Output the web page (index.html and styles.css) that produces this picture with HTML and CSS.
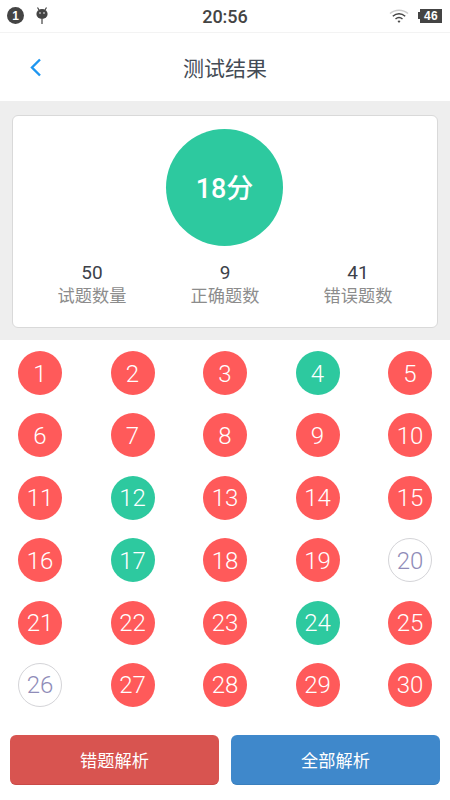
FILE: index.html
```html
<!DOCTYPE html>
<html lang="zh">
<head>
<meta charset="utf-8">
<title>测试结果</title>
<link rel="stylesheet" href="styles.css">
</head>
<body>
<div class="status">
  <div class="status-left">
    <span class="badge">1</span>
    <svg class="android" width="16" height="20" viewBox="0 0 16 20"><path d="M3.5 1.5 5 4M12.5 1.5 11 4" stroke="#444" stroke-width="1.2" fill="none"/><ellipse cx="8" cy="8" rx="5.6" ry="5" fill="#444"/><circle cx="6" cy="7" r=".8" fill="#fff"/><circle cx="10" cy="7" r=".8" fill="#fff"/><rect x="7.4" y="13" width="1.2" height="5" fill="#444"/></svg>
  </div>
  <div class="clock">20:56</div>
  <div class="status-right">
    <svg width="20" height="16" viewBox="0 0 20 16"><path d="M1 5.5C6 1 14 1 19 5.5" stroke="#ccc" stroke-width="1.5" fill="none"/><path d="M3.8 8.2C7.5 5 12.5 5 16.2 8.2" stroke="#444" stroke-width="1.5" fill="none"/><path d="M6.5 11C8.6 9.3 11.4 9.3 13.5 11" stroke="#444" stroke-width="1.5" fill="none"/><path d="M8.5 13 10 15l1.500-2c-1-.7-2-.7-3 0z" fill="#444"/></svg>
    <div class="battery"><span class="tip"></span><span class="level">46</span></div>
  </div>
</div>
<header class="nav">
  <svg class="back" width="14" height="22" viewBox="0 0 14 22"><path d="M12 3.500 4 11.500l8 8" stroke="#1e96f0" stroke-width="2.400" fill="none"/></svg>
  <h1 class="title">测试结果</h1>
</header>
<section class="summary">
  <div class="card">
    <div class="score">18分</div>
    <div class="stats">
      <div class="stat"><div class="num">50</div><div class="label">试题数量</div></div>
      <div class="stat"><div class="num">9</div><div class="label">正确题数</div></div>
      <div class="stat"><div class="num">41</div><div class="label">错误题数</div></div>
    </div>
  </div>
</section>
<section class="grid">
  <div class="q w">1</div><div class="q w">2</div><div class="q w">3</div><div class="q r">4</div><div class="q w">5</div>
  <div class="q w">6</div><div class="q w">7</div><div class="q w">8</div><div class="q w">9</div><div class="q w">10</div>
  <div class="q w">11</div><div class="q r">12</div><div class="q w">13</div><div class="q w">14</div><div class="q w">15</div>
  <div class="q w">16</div><div class="q r">17</div><div class="q w">18</div><div class="q w">19</div><div class="q n">20</div>
  <div class="q w">21</div><div class="q w">22</div><div class="q w">23</div><div class="q r">24</div><div class="q w">25</div>
  <div class="q n">26</div><div class="q w">27</div><div class="q w">28</div><div class="q w">29</div><div class="q w">30</div>
</section>
<footer class="actions">
  <button class="btn red">错题解析</button>
  <button class="btn blue">全部解析</button>
</footer>
</body>
</html>
```
FILE: styles.css
```css
* { box-sizing: border-box; }
html, body { margin: 0; padding: 0; }
body {
  width: 450px; height: 800px; overflow: hidden; background: #fff;
  font-family: "Liberation Sans", "Noto Sans CJK SC", sans-serif;
}
.status {
  height: 33px; display: flex; align-items: center; justify-content: space-between;
  padding: 0 8px 1px 7px; border-bottom: 1px solid #f3f3f3; position: relative;
}
.status-left { display: flex; align-items: center; gap: 10px; }
.badge {
  width: 17px; height: 17px; border-radius: 50%; background: #444; color: #fff;
  font-size: 12px; font-weight: 700; display: flex; align-items: center; justify-content: center;
}
.clock {
  position: absolute; left: 0; right: 0; top: 7px; text-align: center;
  font-family: Roboto, sans-serif; font-size: 18px; line-height: 20px; color: #444; font-weight: 500;
}
.status-right { display: flex; align-items: center; gap: 9px; }
.battery { display: flex; align-items: center; }
.tip { width: 2px; height: 7px; background: #444; }
.level {
  width: 22px; height: 14px; background: #444; color: #fff; font-size: 12px; font-weight: 700;
  line-height: 14px; text-align: center; letter-spacing: .3px;
}
.nav { height: 68px; display: flex; align-items: center; justify-content: center; position: relative; }
.back { position: absolute; left: 28px; top: 23px; }
.title { margin: 0; font-size: 21px; font-weight: 400; color: #444b55; }
.summary { height: 239px; background: #eee; padding: 14px 12px 0; }
.card {
  height: 213px; background: #fff; border: 1px solid #d9d9d9; border-radius: 6px;
  display: flex; flex-direction: column; align-items: center; padding-top: 13px;
}
.score {
  width: 117px; height: 117px; border-radius: 50%; background: #2dc99f; color: #fff;
  font-family: Roboto, "Noto Sans CJK SC", sans-serif; font-size: 27px; font-weight: 500;
  display: flex; align-items: center; justify-content: center;
  padding-bottom: 2px; margin-right: 1px;
}
.stats { display: flex; justify-content: space-between; width: 336px; margin-top: 16px; }
.stat { width: 70px; text-align: center; }
.num { font-family: Roboto, "Liberation Sans", sans-serif; font-weight: 400; font-size: 19px; line-height: 22px; color: #3c4149; }
.label { font-size: 17.2px; line-height: 24px; color: #8c8c8c; white-space: nowrap; }
.grid {
  height: 395px; padding: 11px 18px 0;
  display: grid; grid-template-columns: repeat(5, 44px); grid-auto-rows: 44px;
  justify-content: space-between; align-content: start; row-gap: 18.400px;
}
.q {
  border-radius: 50%; display: flex; align-items: center; justify-content: center;
  font-family: Roboto, "Liberation Sans", sans-serif; font-size: 24px; font-weight: 300;
  padding-top: 1px;
}
.w { background: #ff5a5a; color: #fff; }
.r { background: #2dc99f; color: #fff; }
.n { border: 1px solid #d4d4d8; color: #8f8cb8; background: #fff; }
.actions { display: flex; justify-content: space-between; padding: 0 10px; }
.btn {
  width: 209px; height: 50px; border: 0; border-radius: 6px; color: #fff;
  font-family: inherit; font-size: 17.2px; padding: 0;
}
.red { background: #d85450; border-bottom: 1px solid #c94a47; }
.blue { background: #3f88cb; border-bottom: 1px solid #3a7fbd; }
```
